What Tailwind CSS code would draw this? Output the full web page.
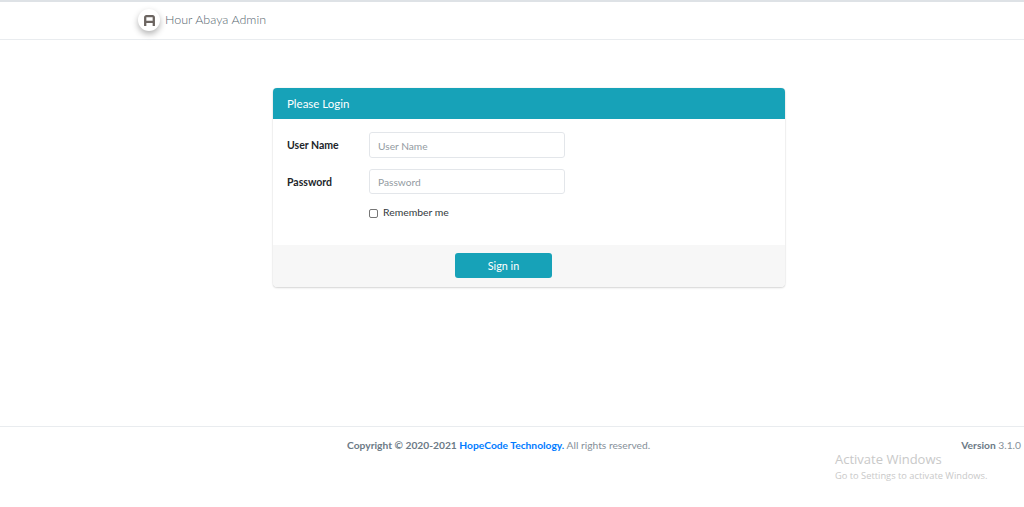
<!DOCTYPE html>
<html lang="en">
<head>
    <meta charset="UTF-8">
    <meta name="viewport" content="width=device-width, initial-scale=1.0">
    <title>Hour Abaya Admin</title>
    <script src="https://cdn.jsdelivr.net/npm/@tailwindcss/browser@4"></script>
</head>
<body class="bg-white h-[507px] overflow-hidden relative flex flex-col font-['Lato','Noto_Sans',sans-serif] text-[#212529]">
    <!-- Top nav -->
    <nav class="h-10 border-t-2 border-b border-t-[#dee2e6] border-b-[#e9ecef] pl-[138px] pb-[1px] flex items-center shrink-0">
        <div class="w-[22px] h-[22px] rounded-full bg-white shadow-[0_3px_6px_rgba(0,0,0,0.3)] flex items-center justify-center">
            <svg width="11" height="11" viewBox="0 0 11 11" fill="none" stroke="#6b6460" stroke-width="2.3">
                <path d="M1.2 11V2.4A1.2 1.2 0 0 1 2.4 1.2h6.2a1.2 1.2 0 0 1 1.2 1.2V11M1.2 6.8h8.6"/>
            </svg>
        </div>
        <span class="ml-[5px] text-[12.5px] font-light text-[#56666f]">Hour Abaya Admin</span>
    </nav>

    <!-- Login card -->
    <main class="flex-1 pt-12">
        <form class="w-[512px] ml-[273px] rounded-[4px] bg-white shadow-[0_0_1px_rgba(0,0,0,0.2),0_1px_2px_rgba(0,0,0,0.15)] overflow-hidden">
            <div class="h-[31px] bg-[#17a2b8] px-[14px] flex items-center text-[11.5px] text-white">Please Login</div>
            <div class="h-[126px] pl-[14px] pt-[13px]">
                <div class="flex items-center h-[26px]">
                    <label class="w-[82px] pt-px text-[10.5px] font-bold">User Name</label>
                    <input type="text" placeholder="User Name" class="w-[196px] h-[26px] px-2 pt-px rounded-[3px] border border-[#e3e6ea] text-[10.2px] placeholder:text-[#939ba2] outline-none">
                </div>
                <div class="flex items-center h-[25px] mt-[11px]">
                    <label class="w-[82px] pt-[3px] text-[10.5px] font-bold">Password</label>
                    <input type="password" placeholder="Password" class="w-[196px] h-[25px] px-2 rounded-[3px] border border-[#e3e6ea] text-[10.2px] placeholder:text-[#939ba2] outline-none">
                </div>
                <div class="flex items-center mt-[9px] ml-[82px] h-[20px]">
                    <span class="w-[9px] h-[9px] rounded-[2px] border border-[#767676] bg-white"></span>
                    <span class="ml-[5px] text-[10.4px] text-[#343a40]">Remember me</span>
                </div>
            </div>
            <div class="h-[42px] bg-[#f7f7f7] pl-[182px] pt-2">
                <button type="button" class="block w-[97px] h-[25px] pt-px rounded-[3px] bg-[#17a2b8] text-white text-[10.8px]">Sign in</button>
            </div>
        </form>
    </main>

    <!-- Footer -->
    <footer class="h-[81px] shrink-0 border-t border-[#e9ecef] relative pl-[347px] pt-[11px] text-[10.25px] text-[#869099]">
        <p><strong class="text-[#6c7a86]">Copyright © 2020-2021 <a href="#" class="text-[#007bff]">HopeCode Technology.</a></strong> All rights reserved.</p>
        <div class="absolute right-[3px] top-[11px]"><b class="text-[#6c7a86]">Version</b> 3.1.0</div>
    </footer>

    <!-- Activation watermark -->
    <div class="absolute left-[835px] top-[451px] font-['Open_Sans',sans-serif] text-[#c9c9c9] pointer-events-none">
        <div class="text-[13px] leading-[17px]">Activate Windows</div>
        <div class="text-[9.3px] leading-[14px] mt-[1px]">Go to Settings to activate Windows.</div>
    </div>
</body>
</html>
